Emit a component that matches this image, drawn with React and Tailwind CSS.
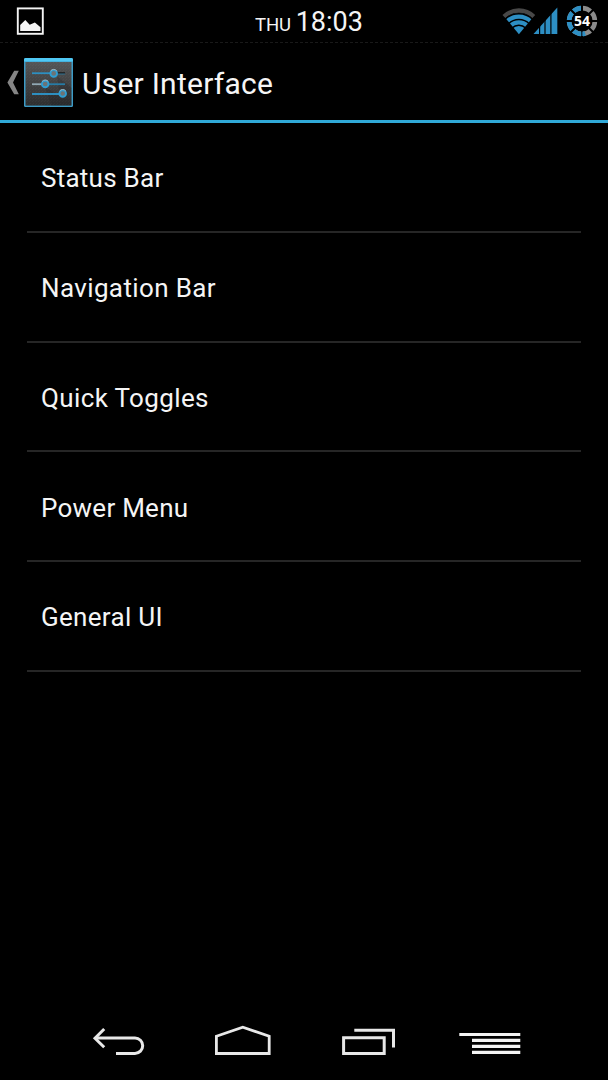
const items = [
  { label: "Status Bar", className: "tracking-[0.25px]" },
  { label: "Navigation Bar", className: "tracking-[0.37px]" },
  { label: "Quick Toggles", className: "tracking-[0.37px]" },
  { label: "Power Menu", className: "tracking-[0.25px]" },
  { label: "General UI", className: "tracking-[0.3px]" },
];

function PictureIcon() {
  return (
    <svg width="28" height="28" viewBox="0 0 28 28">
      <rect x="1.8" y="1.4" width="25" height="25.4" fill="none" stroke="#f4f4f4" strokeWidth="1.9" />
      <path d="M4.2 24V18L9.3 13L13.7 17.7L18.9 15.6L24.5 20.2V24Z" fill="#f4f4f4" />
    </svg>
  );
}

function WifiIcon() {
  return (
    <svg width="34" height="28" viewBox="0 0 34 28">
      <path d="M3.8 11.4A19 19 0 0 1 30 11.4L16.9 27.2Z" fill="#2d8fc4" />
      <path d="M2 9.6A21.1 21.1 0 0 1 31.7 9.6" fill="none" stroke="#484848" strokeWidth="4.4" />
      <g fill="none" stroke="#000" strokeWidth="1.5">
        <path d="M3 12.4A19.5 19.5 0 0 1 30.7 12.4" />
        <path d="M6.4 16.9A14.7 14.7 0 0 1 27.4 16.9" />
        <path d="M10 21A9.8 9.8 0 0 1 23.7 21" />
      </g>
    </svg>
  );
}

function SignalIcon() {
  return (
    <svg width="25" height="28" viewBox="0 0 25 28">
      <path d="M0.5 27L24.3 0.5V27Z" fill="#2d8fc4" />
      <g stroke="#000" strokeWidth="1.2">
        <path d="M6.6 0V28" />
        <path d="M12 0V28" />
        <path d="M17.9 0V28" />
      </g>
    </svg>
  );
}

function Battery({ level }) {
  return (
    <div className="grid h-8 w-8 place-items-center">
      <svg className="col-start-1 row-start-1" width="32" height="32" viewBox="0 0 32 32" fill="none" strokeWidth="4.6">
        <circle cx="16" cy="16" r="12.9" stroke="#8b8b8b" />
        <path d="M16 3.1A12.9 12.9 0 1 0 19.2 28.5" stroke="#2d8fc4" />
        <path d="M16 0V7M16 25V32M0 16H7M25 16H32M4 4L10 10M22 22L28 28M28 4L22 10M10 22L4 28" stroke="#000" strokeWidth="2" />
        <path d="M16.2 26.5V31" stroke="#2d8fc4" strokeWidth="1" />
      </svg>
      <span className="z-10 col-start-1 row-start-1 font-['Open_Sans',sans-serif] text-[14px] leading-none font-bold text-white">{level}</span>
    </div>
  );
}

function StatusBar() {
  return (
    <header className="grid h-[43px] grid-cols-3 border-b border-dashed border-[#191919]">
      <div className="pt-[7px] pl-4">
        <PictureIcon />
      </div>
      <div className="flex items-baseline justify-center gap-[5px] pt-[6px] pl-[10px] leading-8">
        <span className="text-[18.5px] tracking-[-0.2px]">THU</span>
        <span className="text-[27px]">18:03</span>
      </div>
      <div className="flex justify-end pt-[5px] pr-[10px]">
        <div className="-mr-[3px] pt-[2px]">
          <WifiIcon />
        </div>
        <div className="pt-[2px] pr-[8px]">
          <SignalIcon />
        </div>
        <Battery level={54} />
      </div>
    </header>
  );
}

function SettingsIcon() {
  return (
    <svg width="49" height="49" viewBox="0 0 49 49">
      <defs>
        <linearGradient id="panel" x1="0" y1="0" x2="0" y2="1">
          <stop offset="0" stopColor="#555657" />
          <stop offset="1" stopColor="#2d2e2f" />
        </linearGradient>
        <pattern id="grain" width="3" height="3" patternUnits="userSpaceOnUse">
          <path d="M0 0h1v1H0zM2 1h1v1H2z" fill="#fff" opacity="0.03" />
        </pattern>
      </defs>
      <rect width="49" height="49" rx="1.5" fill="#3d9bc6" />
      <path d="M1.5 0H47.5Q49 0 49 1.5V3.6H0V1.5Q0 0 1.5 0Z" fill="#4fc8f4" />
      <rect x="1.5" y="4" width="46" height="43.6" fill="url(#panel)" />
      <rect x="1.5" y="4" width="46" height="43.6" fill="url(#grain)" />
      <path d="M33 18L47.5 30V47.6H27.5L21 29L36 38.2Z" fill="#171819" opacity="0.18" />
      <g strokeWidth="1.8">
        <path d="M8 15.2H29" stroke="#2d8fc0" />
        <path d="M29 15H41" stroke="#222" />
        <path d="M33 16H41" stroke="#277ba5" strokeWidth="0.8" />
        <path d="M8 26.2H20" stroke="#91a8b3" />
        <path d="M20 26.2H41" stroke="#277ba5" />
        <path d="M8 36H41" stroke="#2d8fc0" />
      </g>
      <g fill="#6d7375" stroke="#2e9dd2" strokeWidth="1.9">
        <circle cx="29.7" cy="15.4" r="3.3" />
        <circle cx="21.2" cy="26" r="3.3" />
        <circle cx="38.7" cy="35.5" r="3.3" />
      </g>
      <g fill="none" stroke="#a3b4bb" strokeWidth="1">
        <path d="M26.6 12.9A4 4 0 0 1 32.8 12.9" />
        <path d="M18.1 23.5A4 4 0 0 1 24.3 23.5" />
        <path d="M35.6 33A4 4 0 0 1 41.8 33" />
      </g>
    </svg>
  );
}

function ActionBar() {
  return (
    <div className="flex h-[80px] items-center border-b-[3px] border-[#30a9d8] pt-0.5 pl-[7px]">
      <svg className="mr-[5px]" width="12" height="25" viewBox="0 0 12 25">
        <path d="M7.2 0.7H11.8L6 12.5L11.8 24.3H7.2L0.4 12.5Z" fill="#858585" />
      </svg>
      <SettingsIcon />
      <h1 className="ml-[9px] pt-px text-[30px] tracking-[0.25px]">User Interface</h1>
    </div>
  );
}

function NavBar() {
  return (
    <nav className="flex h-[81px] items-start pt-[25px] pl-[92px]">
      <svg className="mr-[69px]" width="53" height="34" viewBox="0 0 53 34" fill="none" stroke="#e8e8e8" strokeWidth="3">
        <path d="M4 14H43A7.7 7.7 0 0 1 43 29.4H24" />
        <path d="M12.2 5L3 14.2L12.2 23.3" />
      </svg>
      <svg className="mr-[69px]" width="58" height="34" viewBox="0 0 58 34" fill="none" stroke="#e8e8e8" strokeWidth="2.8">
        <path d="M2.4 12.3L28.8 3.2L55.2 12.3V29.5H2.4Z" />
      </svg>
      <svg className="mr-[63px]" width="55" height="34" viewBox="0 0 55 34" fill="none" stroke="#e8e8e8" strokeWidth="3">
        <path d="M2.6 13.8H43.2V29.4H2.6Z" />
        <path d="M13.3 6.2H52.5V23.4" />
      </svg>
      <svg width="62" height="34" viewBox="0 0 62 34" fill="#f4f4f4">
        <path d="M0.3 8.9H61.3V12H0.3zM13 14.8H61.3V18H13zM13 20.8H61.3V24H13zM13 26.8H61.3V30H13z" />
      </svg>
    </nav>
  );
}

export default function App() {
  return (
    <div className="flex h-[1080px] w-[608px] flex-col bg-black font-[Roboto,sans-serif] text-[#f5f5f5]">
      <StatusBar />
      <ActionBar />
      <ul className="flex-1 px-[27px]">
        {items.map((item) => (
          <li key={item.label} className="flex h-[109.75px] items-center border-b-2 border-[#262626] pt-1 pl-[14px] text-[26px]">
            <span className={item.className}>{item.label}</span>
          </li>
        ))}
      </ul>
      <NavBar />
    </div>
  );
}
